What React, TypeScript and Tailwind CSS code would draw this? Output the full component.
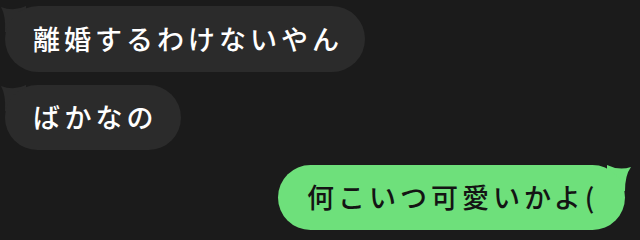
const jp = { fontFamily: '"Noto Sans CJK JP", "Noto Sans", sans-serif' };

function LeftBubble({ text, className }: { text: string; className?: string }) {
    return (
        <div className={"relative ml-[5px] self-start " + (className ?? "")}>
            <svg className="absolute -left-[5px] -top-[2px]" width="30" height="30" viewBox="0 0 30 30">
                <path d="M26 2 Q14 8 1 3 Q6 12 5 28 L26 28 Z" fill="#2b2b2b" />
            </svg>
            <div
                className="relative flex h-full items-center rounded-full bg-[#2b2b2b] pl-[28px] text-[27px] font-medium tracking-[4px] whitespace-nowrap text-white"
                style={jp}
            >
                {text}
            </div>
        </div>
    );
}

function RightBubble({ text, className }: { text: string; className?: string }) {
    return (
        <div className={"relative mr-[15px] self-end " + (className ?? "")}>
            <svg className="absolute -right-[8px] -top-[2px]" width="30" height="30" viewBox="0 0 30 30">
                <path d="M4 2 Q16 8 28 4 Q22 12 22 28 L4 28 Z" fill="#6ee07b" />
            </svg>
            <div
                className="relative flex h-full items-center rounded-full bg-[#6ee07b] pl-[29px] text-[27px] font-medium tracking-[4px] whitespace-nowrap text-[#141414]"
                style={jp}
            >
                {text}
            </div>
        </div>
    );
}

export default function App() {
    return (
        <div className="flex h-[240px] w-[640px] flex-col overflow-hidden bg-[#1b1b1b] pt-[6px]">
            <LeftBubble text="離婚するわけないやん" className="h-[66px] w-[360px]" />
            <LeftBubble text="ばかなの" className="mt-[13px] h-[65px] w-[176px]" />
            <RightBubble text="何こいつ可愛いかよ(" className="mt-[15px] h-[65px] w-[347px]" />
        </div>
    );
}
